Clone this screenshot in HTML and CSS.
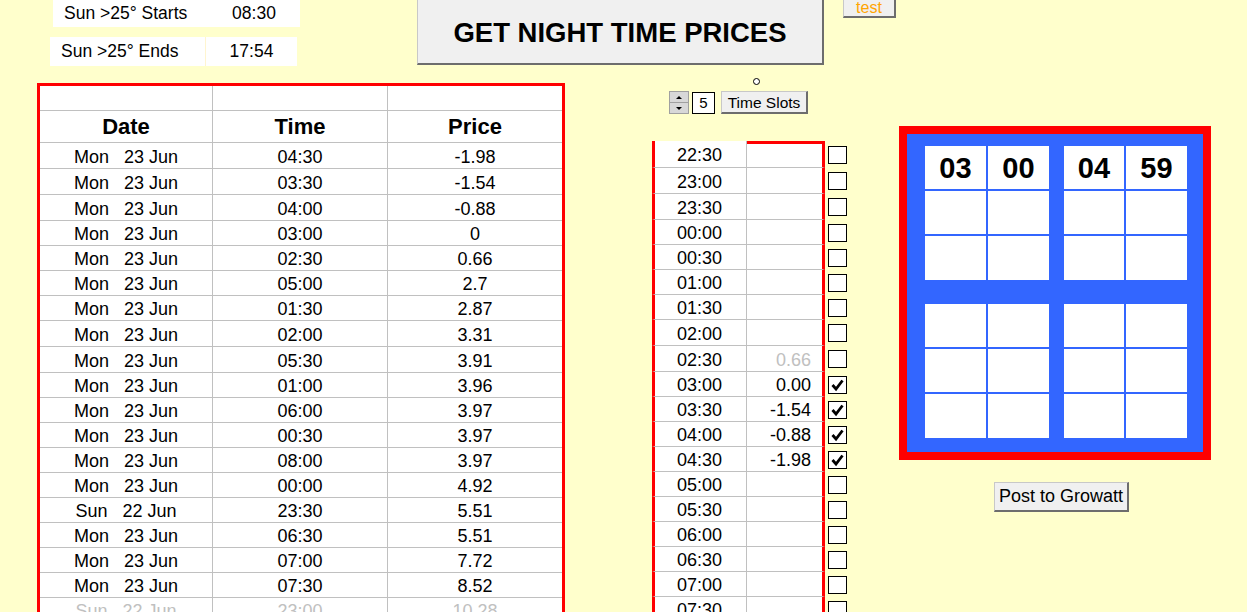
FILE: index.html
```html
<!DOCTYPE html>
<html lang="en">
<head>
  <meta charset="UTF-8" />
  <title>Night Time Prices</title>
  <link rel="stylesheet" href="styles.css">
</head>
<body>

  <div class="top">
    <div class="sun">
      <div class="sun-box first">
        <span class="sun-label">Sun &gt;25° Starts</span>
        <span class="sun-time">08:30</span>
      </div>
      <div class="sun-box second">
        <span class="sun-label">Sun &gt;25° Ends</span>
        <span class="sun-time">17:54</span>
      </div>
    </div>
    <button class="big-btn">GET NIGHT TIME PRICES</button>
    <button class="test-btn">test</button>
  </div>

  <div class="main">

    <!-- sorted price list -->
    <div class="prices">
      <div class="prow blank"><div class="c"></div><div class="c"></div><div class="c"></div></div>
      <div class="prow head"><div class="c">Date</div><div class="c">Time</div><div class="c">Price</div></div>
      <div class="prow h26"><div class="c">Mon   23 Jun</div><div class="c">04:30</div><div class="c">-1.98</div></div>
      <div class="prow h26"><div class="c">Mon   23 Jun</div><div class="c">03:30</div><div class="c">-1.54</div></div>
      <div class="prow h26"><div class="c">Mon   23 Jun</div><div class="c">04:00</div><div class="c">-0.88</div></div>
      <div class="prow"><div class="c">Mon   23 Jun</div><div class="c">03:00</div><div class="c">0</div></div>
      <div class="prow"><div class="c">Mon   23 Jun</div><div class="c">02:30</div><div class="c">0.66</div></div>
      <div class="prow"><div class="c">Mon   23 Jun</div><div class="c">05:00</div><div class="c">2.7</div></div>
      <div class="prow"><div class="c">Mon   23 Jun</div><div class="c">01:30</div><div class="c">2.87</div></div>
      <div class="prow h26"><div class="c">Mon   23 Jun</div><div class="c">02:00</div><div class="c">3.31</div></div>
      <div class="prow h26"><div class="c">Mon   23 Jun</div><div class="c">05:30</div><div class="c">3.91</div></div>
      <div class="prow"><div class="c">Mon   23 Jun</div><div class="c">01:00</div><div class="c">3.96</div></div>
      <div class="prow"><div class="c">Mon   23 Jun</div><div class="c">06:00</div><div class="c">3.97</div></div>
      <div class="prow"><div class="c">Mon   23 Jun</div><div class="c">00:30</div><div class="c">3.97</div></div>
      <div class="prow"><div class="c">Mon   23 Jun</div><div class="c">08:00</div><div class="c">3.97</div></div>
      <div class="prow"><div class="c">Mon   23 Jun</div><div class="c">00:00</div><div class="c">4.92</div></div>
      <div class="prow"><div class="c">Sun   22 Jun</div><div class="c">23:30</div><div class="c">5.51</div></div>
      <div class="prow"><div class="c">Mon   23 Jun</div><div class="c">06:30</div><div class="c">5.51</div></div>
      <div class="prow"><div class="c">Mon   23 Jun</div><div class="c">07:00</div><div class="c">7.72</div></div>
      <div class="prow"><div class="c">Mon   23 Jun</div><div class="c">07:30</div><div class="c">8.52</div></div>
      <div class="prow faded"><div class="c">Sun   22 Jun</div><div class="c">23:00</div><div class="c">10.28</div></div>
    </div>

    <!-- half hour slots -->
    <div class="slots-col">
      <div class="controls">
        <span class="handle"></span>
        <div class="spinner">
          <span class="spin-up"></span>
          <span class="spin-down"></span>
        </div>
        <div class="slot-count">5</div>
        <button class="small-btn">Time Slots</button>
      </div>

      <div class="slots">
        <div class="srow first"><div class="t">22:30</div><div class="v"></div><div class="k"><span class="box"></span></div></div>
        <div class="srow h26"><div class="t">23:00</div><div class="v"></div><div class="k"><span class="box"></span></div></div>
        <div class="srow h26"><div class="t">23:30</div><div class="v"></div><div class="k"><span class="box"></span></div></div>
        <div class="srow"><div class="t">00:00</div><div class="v"></div><div class="k"><span class="box"></span></div></div>
        <div class="srow"><div class="t">00:30</div><div class="v"></div><div class="k"><span class="box"></span></div></div>
        <div class="srow"><div class="t">01:00</div><div class="v"></div><div class="k"><span class="box"></span></div></div>
        <div class="srow"><div class="t">01:30</div><div class="v"></div><div class="k"><span class="box"></span></div></div>
        <div class="srow h26"><div class="t">02:00</div><div class="v"></div><div class="k"><span class="box"></span></div></div>
        <div class="srow h26"><div class="t">02:30</div><div class="v grey">0.66</div><div class="k"><span class="box"></span></div></div>
        <div class="srow"><div class="t">03:00</div><div class="v">0.00</div><div class="k"><span class="box"><svg viewBox="0 0 17 16" width="17" height="16"><path d="M3.5 8 L7 12 L13.5 3.5" fill="none" stroke="#000" stroke-width="2.8"/></svg></span></div></div>
        <div class="srow"><div class="t">03:30</div><div class="v">-1.54</div><div class="k"><span class="box"><svg viewBox="0 0 17 16" width="17" height="16"><path d="M3.5 8 L7 12 L13.5 3.5" fill="none" stroke="#000" stroke-width="2.8"/></svg></span></div></div>
        <div class="srow"><div class="t">04:00</div><div class="v">-0.88</div><div class="k"><span class="box"><svg viewBox="0 0 17 16" width="17" height="16"><path d="M3.5 8 L7 12 L13.5 3.5" fill="none" stroke="#000" stroke-width="2.8"/></svg></span></div></div>
        <div class="srow"><div class="t">04:30</div><div class="v">-1.98</div><div class="k"><span class="box"><svg viewBox="0 0 17 16" width="17" height="16"><path d="M3.5 8 L7 12 L13.5 3.5" fill="none" stroke="#000" stroke-width="2.8"/></svg></span></div></div>
        <div class="srow"><div class="t">05:00</div><div class="v"></div><div class="k"><span class="box"></span></div></div>
        <div class="srow"><div class="t">05:30</div><div class="v"></div><div class="k"><span class="box"></span></div></div>
        <div class="srow"><div class="t">06:00</div><div class="v"></div><div class="k"><span class="box"></span></div></div>
        <div class="srow"><div class="t">06:30</div><div class="v"></div><div class="k"><span class="box"></span></div></div>
        <div class="srow"><div class="t">07:00</div><div class="v"></div><div class="k"><span class="box"></span></div></div>
        <div class="srow"><div class="t">07:30</div><div class="v"></div><div class="k"><span class="box"></span></div></div>
      </div>
    </div>

    <!-- growatt charge windows -->
    <div class="right-col">
      <div class="clock">
        <div class="block">
          <div class="cell">03</div><div class="cell">00</div>
          <div class="cell"></div><div class="cell"></div>
          <div class="cell"></div><div class="cell"></div>
        </div>
        <div class="block">
          <div class="cell">04</div><div class="cell">59</div>
          <div class="cell"></div><div class="cell"></div>
          <div class="cell"></div><div class="cell"></div>
        </div>
        <div class="block">
          <div class="cell"></div><div class="cell"></div>
          <div class="cell"></div><div class="cell"></div>
          <div class="cell"></div><div class="cell"></div>
        </div>
        <div class="block">
          <div class="cell"></div><div class="cell"></div>
          <div class="cell"></div><div class="cell"></div>
          <div class="cell"></div><div class="cell"></div>
        </div>
      </div>
      <button class="post-btn">Post to Growatt</button>
    </div>

  </div>

</body>
</html>
```

FILE: styles.css
```css
html, body {
  height: 612px;
  overflow: hidden;
}

body {
  margin: 0;
  background: #ffffcc;
  font-family: "Liberation Sans", Arial, sans-serif;
  color: #000;
}

button {
  font-family: "Liberation Sans", Arial, sans-serif;
  padding: 0;
  background: #f0f0f0;
  color: #000;
  border-style: solid;
  border-color: #c8c8c8 #6d6d6d #6d6d6d #c8c8c8;
  border-width: 1px 2px 2px 1px;
  cursor: pointer;
}

/* top strip */
.top {
  display: flex;
  align-items: flex-start;
  height: 83px;
}

.sun {
  display: flex;
  flex-direction: column;
  gap: 10px;
  margin-left: 50px;
}

.sun-box {
  display: flex;
  width: 247px;
  background: #fff;
  font-size: 17.5px;
}

.sun-box.first {
  height: 27px;
  margin-left: 3px;
}

.sun-box.second {
  height: 29px;
}

.sun-label {
  width: 155px;
  padding-left: 11px;
  box-sizing: border-box;
  display: flex;
  align-items: center;
}

.sun-time {
  flex: 1;
  display: flex;
  align-items: center;
  justify-content: center;
}

.sun-box.second .sun-time {
  border-left: 1px solid #fff5d0;
}

.big-btn {
  margin-left: 117px;
  width: 407px;
  height: 65px;
  border-top: none;
  padding-top: 3px;
  font-size: 27.5px;
  font-weight: bold;
}

.test-btn {
  margin-left: 19px;
  width: 53px;
  height: 18px;
  border-top: none;
  color: #ffa500;
  font-size: 16px;
  line-height: 14px;
}

/* main area */
.main {
  display: flex;
  align-items: flex-start;
  padding-left: 37px;
}

.prices {
  width: 522px;
  border: 3px solid #ff0000;
  border-bottom: none;
  background: #fff;
}

.prow {
  display: grid;
  grid-template-columns: 173px 175px 174px;
  height: 25px;
}

.prow .c {
  box-sizing: border-box;
  border-bottom: 1px solid #c0c0c0;
  border-right: 1px solid #c0c0c0;
  display: flex;
  align-items: center;
  justify-content: center;
  padding-top: 3px;
  font-size: 18px;
  white-space: pre;
}

.prow .c:last-child {
  border-right: none;
}

.prow.blank {
  height: 25px;
}

.prow.head {
  height: 32px;
}

.prow.head .c {
  font-size: 22px;
  font-weight: bold;
  padding-top: 1px;
}

.prow.h26,
.srow.h26 {
  height: 26px;
}

.prow.faded .c {
  color: #c0c0c0;
}

/* slots column */
.slots-col {
  margin-left: 87px;
}

.controls {
  position: relative;
  display: flex;
  align-items: center;
  margin: 8px 0 0 17px;
  height: 23px;
}

.handle {
  position: absolute;
  left: 84px;
  top: -13px;
  width: 5px;
  height: 5px;
  border: 1px solid #000;
  border-radius: 50%;
  background: #fff;
}

.spinner {
  display: flex;
  flex-direction: column;
  width: 20px;
  height: 23px;
  border: 1px solid #a0a0a0;
  box-sizing: border-box;
  background: #d8d8d8;
}

.spinner span {
  flex: 1;
  display: flex;
  align-items: center;
  justify-content: center;
}

.spin-up {
  border-bottom: 1px solid #a0a0a0;
}

.spin-up::after {
  content: "";
  border-left: 3px solid transparent;
  border-right: 3px solid transparent;
  border-bottom: 3px solid #000;
}

.spin-down::after {
  content: "";
  border-left: 3px solid transparent;
  border-right: 3px solid transparent;
  border-top: 3px solid #000;
}

.slot-count {
  margin-left: 3px;
  width: 23px;
  height: 22px;
  box-sizing: border-box;
  border: 1px solid #000;
  background: #fff;
  display: flex;
  align-items: center;
  justify-content: center;
  font-size: 15px;
}

.small-btn {
  margin-left: 6px;
  width: 87px;
  height: 23px;
  padding-top: 1px;
  font-size: 15.5px;
}

.slots {
  margin-top: 27px;
}

.srow {
  display: grid;
  grid-template-columns: 95px 78px 22px;
  height: 25px;
}

.srow.first {
  height: 27px;
}

.srow .t,
.srow .v {
  box-sizing: border-box;
  background: #fff;
  border-bottom: 1px solid #c0c0c0;
  display: flex;
  align-items: center;
  padding-top: 3px;
  font-size: 18px;
}

.srow .t {
  border-left: 3px solid #ff0000;
  border-right: 1px solid #c0c0c0;
  justify-content: center;
  padding-right: 2px;
}

.srow .v {
  border-right: 3px solid #ff0000;
  justify-content: flex-end;
  padding-right: 11px;
}

.srow.first .v {
  border-top: 3px solid #ff0000;
}

.srow .v.grey {
  color: #c0c0c0;
}

.srow .k {
  display: flex;
  align-items: center;
  padding-left: 3px;
}

.box {
  width: 19px;
  height: 18px;
  box-sizing: border-box;
  border: 1px solid #000;
  background: #fff;
  display: flex;
}

/* charge window panel */
.right-col {
  margin-left: 52px;
  margin-top: 43px;
}

.clock {
  display: grid;
  grid-template-columns: 124px 123px;
  column-gap: 15px;
  row-gap: 24px;
  border: 8px solid #ff0000;
  background: #3366ff;
  padding: 12px 16px 14px 18px;
}

.block {
  display: grid;
  grid-template-columns: 61px 61px;
  grid-template-rows: 43px 43px 44px;
  gap: 2px;
}

.block:nth-child(even) {
  grid-template-columns: 60px 61px;
}

.cell {
  background: #fff;
  display: flex;
  align-items: center;
  justify-content: center;
  padding-top: 1px;
  font-size: 29px;
  font-weight: bold;
}

.post-btn {
  display: block;
  margin: 22px 0 0 95px;
  width: 135px;
  height: 30px;
  font-size: 18px;
}
```
